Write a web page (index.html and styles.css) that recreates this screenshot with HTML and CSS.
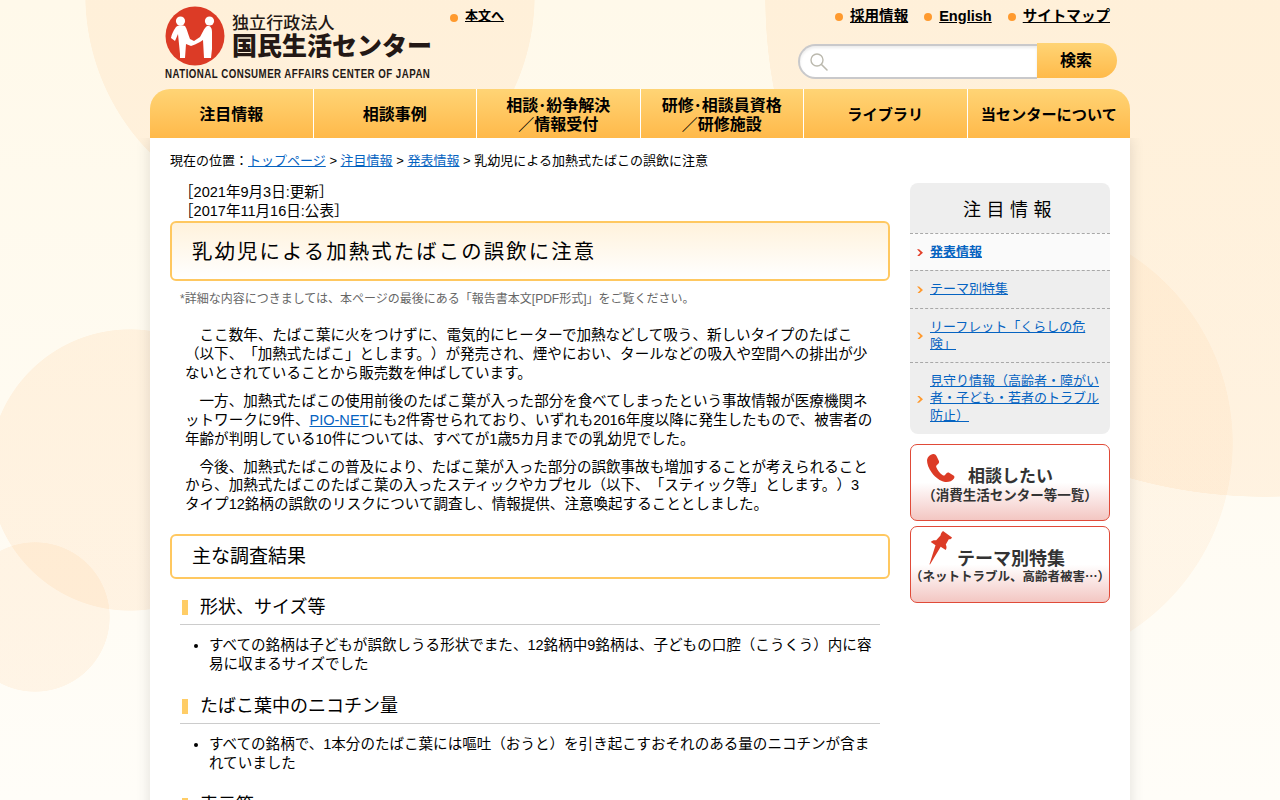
FILE: index.html
```html
<!DOCTYPE html>
<html lang="ja">
<head>
<meta charset="utf-8">
<title>乳幼児による加熱式たばこの誤飲に注意</title>
<link rel="stylesheet" href="styles.css">
</head>
<body>
<div class="page">
  <header class="header">
    <a class="logo" href="#">
      <div class="logo-top">
        <svg class="logo-mark" width="60" height="60" viewBox="0 0 60 60">
          <circle cx="30" cy="30" r="29.5" fill="#dc3b26"/>
          <circle cx="15.5" cy="15" r="4.6" fill="#fff"/>
          <circle cx="44.5" cy="15" r="4.6" fill="#fff"/>
          <path fill="#fff" d="M11 21C8 25 6.500 29 6 32L10 35 13 28 15 48 15 52 20 52 21 38 26 40 30 38.500 35 36 38 34 39 52 46 52 47 43 47 26 C47 21 45 19.500 42 20 C39 22 37 28 35 31 L29 35 L25 33 C23 28 22 23 20 20 C17 19 13 19 11 21Z"/>
        </svg>
        <div class="logo-names">
          <span class="logo-sub">独立行政法人</span>
          <span class="logo-main">国民生活センター</span>
        </div>
      </div>
      <span class="logo-en">NATIONAL CONSUMER AFFAIRS CENTER OF JAPAN</span>
    </a>
    <a class="skip dot-link" href="#">本文へ</a>
    <div class="header-right">
      <nav class="util">
        <a class="dot-link" href="#">採用情報</a>
        <a class="dot-link" href="#">English</a>
        <a class="dot-link" href="#">サイトマップ</a>
      </nav>
      <form class="search">
        <div class="search-input">
          <svg width="20" height="20" viewBox="0 0 20 20"><circle cx="8" cy="8" r="6" fill="none" stroke="#bbb9ae" stroke-width="1.4"/><path d="M12.500 12.500L18 18" stroke="#bbb9ae" stroke-width="1.600" stroke-linecap="round"/></svg>
        </div>
        <div class="search-btn">検索</div>
      </form>
    </div>
  </header>

  <nav class="gnav">
    <a href="#">注目情報</a>
    <a href="#">相談事例</a>
    <a href="#">相談･紛争解決<br>／情報受付</a>
    <a href="#">研修･相談員資格<br>／研修施設</a>
    <a class="narrow" href="#">ライブラリ</a>
    <a class="narrow" href="#">当センターについて</a>
  </nav>

  <div class="panel">
    <p class="crumbs">現在の位置：<a href="#">トップページ</a> &gt; <a href="#">注目情報</a> &gt; <a href="#">発表情報</a> &gt; 乳幼児による加熱式たばこの誤飲に注意</p>
    <div class="columns">
      <main class="main">
        <p class="dates">［2021年9月3日:更新］<br>［2017年11月16日:公表］</p>
        <h1>乳幼児による加熱式たばこの誤飲に注意</h1>
        <p class="note">*詳細な内容につきましては、本ページの最後にある「報告書本文[PDF形式]」をご覧ください。</p>
        <div class="lead">
          <p>ここ数年、たばこ葉に火をつけずに、電気的にヒーターで加熱などして吸う、新しいタイプのたばこ（以下、「加熱式たばこ」とします。）が発売され、煙やにおい、タールなどの吸入や空間への排出が少ないとされていることから販売数を伸ばしています。</p>
          <p>一方、加熱式たばこの使用前後のたばこ葉が入った部分を食べてしまったという事故情報が医療機関ネットワークに9件、<a href="#">PIO-NET</a>にも2件寄せられており、いずれも2016年度以降に発生したもので、被害者の年齢が判明している10件については、すべてが1歳5カ月までの乳幼児でした。</p>
          <p>今後、加熱式たばこの普及により、たばこ葉が入った部分の誤飲事故も増加することが考えられることから、加熱式たばこのたばこ葉の入ったスティックやカプセル（以下、「スティック等」とします。）3<span class="nowrap">タイプ</span>12銘柄の誤飲のリスクについて調査し、情報提供、注意喚起することとしました。</p>
        </div>
        <h2>主な調査結果</h2>
        <h3>形状、サイズ等</h3>
        <ul>
          <li>すべての銘柄は子どもが誤飲しうる形状でまた、12銘柄中9銘柄は、子どもの口腔（こうくう）内に容易に収まるサイズでした</li>
        </ul>
        <h3>たばこ葉中のニコチン量</h3>
        <ul>
          <li>すべての銘柄で、1本分のたばこ葉には嘔吐（おうと）を引き起こすおそれのある量のニコチンが含まれていました</li>
        </ul>
        <h3>表示等</h3>
      </main>
      <aside class="side">
        <div class="snav">
          <div class="snav-title">注目情報</div>
          <a class="snav-item current" href="#"><span>発表情報</span></a>
          <a class="snav-item" href="#"><span>テーマ別特集</span></a>
          <a class="snav-item" href="#"><span>リーフレット「くらしの危険」</span></a>
          <a class="snav-item" href="#"><span>見守り情報（高齢者・障がい者・子ども・若者のトラブル防止）</span></a>
        </div>
        <a class="banner banner-tel" href="#">
          <span class="banner-head">
            <svg class="banner-icon" width="30" height="30" viewBox="0 0 30 30"><path fill="#dc3b26" d="M7 1C4 1.500 1.500 4 1 7c0 4 1.500 8 5 13 3.500 4.500 8 8 13 9 3.500.5 7-.8 9-3.500.8-1.200.5-2.300-.5-3l-4-2.500c-1.200-.7-2.300-.5-3 .3l-1.500 1.700c-.6.6-1.400.7-2.200.2-2.800-1.800-5.300-5-6.500-8-.3-.9-.1-1.600.6-2.200l1.400-1.300c.8-.8 1-1.800.5-3L10.500 3C9.800 1.500 8.500.8 7 1z"/></svg>
            <b>相談したい</b>
          </span>
          <span class="banner-sub">（消費生活センター等一覧）</span>
        </a>
        <a class="banner banner-pin" href="#">
          <span class="banner-head">
            <svg class="banner-icon" width="24" height="34" viewBox="0 0 24 34"><path fill="#dc3b26" d="M15 0l9 6.500c-.5 1.300-1.700 2-3.200 1.700l-3 5.300c1 2 1 4-.1 5.500l-5-3.300L2 33.500l-.5-.3 6-19-4.700-3.200c1.300-1.600 3.200-2.200 5.400-1.700L12.500 4.500C12.800 3 13.600 1 15 0z"/></svg>
            <b>テーマ別特集</b>
          </span>
          <span class="banner-sub">（ネットトラブル、高齢者被害…）</span>
        </a>
      </aside>
    </div>
  </div>
</div>
</body>
</html>
```
FILE: styles.css
```css
* { box-sizing: border-box; }
html, body { margin: 0; height: 800px; overflow: hidden; }
body {
  font-family: "Liberation Sans", "Noto Sans CJK JP", sans-serif;
  font-size: 14.56px;
  line-height: 1.3;
  color: #000;
  text-spacing-trim: space-all;
  background-color: #fffbf0;
  background-repeat: no-repeat;
  background-image:
    radial-gradient(circle 225px at 310px -5px, rgba(255,189,121,.15) 99.7%, transparent 100%),
    radial-gradient(circle 500px at 1265px -3px, rgba(255,189,121,.15) 99.9%, transparent 100%),
    radial-gradient(circle 225px at 1008px 443px, rgba(255,189,121,.1) 99.7%, transparent 100%),
    radial-gradient(circle 141px at 130px 470px, rgba(255,189,121,.15) 99.5%, transparent 100%),
    radial-gradient(circle 75px at 35px 617px, rgba(255,189,121,.13) 99.2%, transparent 100%),
    linear-gradient(#fff9ea, #fffdf8);
}
a { color: #0563c1; }
.nowrap { white-space: nowrap; }
.page { width: 980px; margin: 0 auto; }

/* header */
.header { display: flex; height: 89px; }
.logo { display: block; width: 285px; margin-left: 15px; padding-top: 6px; color: #231815; text-decoration: none; flex: none; }
.logo-top { display: flex; height: 60px; }
.logo-mark { flex: none; }
.logo-names { display: flex; flex-direction: column; margin-left: 7px; padding-top: 6px; }
.logo-sub { font-size: 17px; font-weight: 500; line-height: 20px; letter-spacing: .1px; font-family: "Noto Sans CJK JP", sans-serif; }
.logo-main { font-size: 25px; font-weight: 900; line-height: 32px; margin-top: -4px; white-space: nowrap; font-family: "Noto Sans CJK JP", sans-serif; }
.logo-en { display: block; font-size: 12.500px; font-weight: 700; line-height: 16px; letter-spacing: .6px; white-space: nowrap; transform: scaleX(.777); transform-origin: left center; }
.dot-link { position: relative; color: #000; font-weight: 700; padding-left: 15px; display: inline-block; }
.dot-link::before { content: ""; position: absolute; left: 0; top: 6px; width: 8px; height: 8px; border-radius: 50%; background: #ff9a2e; }
.skip { font-size: 13px; align-self: flex-start; margin-top: 8px; margin-left: 0; height: 19px; }
.header-right { margin-left: auto; margin-right: 13px; width: 319px; display: flex; flex-direction: column; align-items: flex-end; }
.util { display: flex; gap: 16px; margin-top: 7px; margin-right: 7px; height: 19px; white-space: nowrap; }
.search { display: flex; margin-top: 17px; align-items: flex-start; }
.search-input { width: 239px; height: 35px; margin-top: 1px; background: #fff; border: 2px solid #c9c9cb; border-right: 0; border-radius: 18px 0 0 18px; box-shadow: inset 0 2px 3px rgba(0,0,0,.08); padding: 6px 0 0 9px; }
.search-btn { width: 80px; height: 35px; padding-right: 2px; border-radius: 0 18px 18px 0; background: linear-gradient(#ffd475, #ffba4a); text-align: center; font-size: 16px; font-weight: 700; line-height: 35px; }

/* global nav */
.gnav { display: flex; height: 49px; border-radius: 20px 20px 0 0; overflow: hidden; background: linear-gradient(#ffd475, #ffb94a); }
.gnav a { flex: 1 1 0; display: flex; align-items: center; justify-content: center; padding-top: 2px; text-align: center; color: #000; text-decoration: none; font-size: 16px; font-weight: 700; line-height: 19px; white-space: nowrap; border-left: 1px solid #fff; }
.gnav a:first-child { border-left: 0; }
.gnav a.narrow { font-size: 15.200px; }

/* panel */
.panel { background: #fff; box-shadow: 0 0 14px rgba(0,0,0,.12); padding: 14px 20px 0; height: 700px; clip-path: inset(0 -20px 0 -20px); }
.crumbs { margin: 0; font-size: 13px; line-height: 17px; }
.columns { display: flex; justify-content: space-between; margin-top: 14px; }
.main { width: 720px; }
.dates { margin: 0; padding-left: 9px; line-height: 19px; }
h1 { margin: 0; height: 60px; border: 2px solid #ffc860; border-radius: 6px; background: linear-gradient(#fff2dc, #fff); padding-left: 20px; font-size: 20.400px; font-weight: 400; letter-spacing: 2.100px; line-height: 58px; }
.note { margin: 10px 0 0 10px; font-size: 12px; line-height: 16px; color: #666; }
.lead { margin: 19px 15px 0; }
.lead p { margin: 0 0 9px; text-indent: 1em; }
h2 { margin: 20px 0 0; height: 45px; border: 2px solid #ffc860; border-radius: 6px; padding-left: 20px; font-size: 19px; font-weight: 400; line-height: 41px; }
h3 { position: relative; margin: 16px 10px 0; padding-left: 20px; height: 30px; border-bottom: 1px solid #ccc; font-size: 18px; font-weight: 400; line-height: 24px; }
h3::before { content: ""; position: absolute; left: 2px; top: 5px; width: 6px; height: 15px; background: #ffcd66; }
ul { margin: 11px 10px 0; padding: 0 0 0 29px; list-style: none; }
li { position: relative; line-height: 18.900px; padding-bottom: 4px; }
li::before { content: ""; position: absolute; left: -15px; top: 8px; width: 4px; height: 4px; border-radius: 50%; background: #000; }

/* sidebar */
.side { width: 200px; flex: none; }
.snav { background: #eee; border-radius: 8px; overflow: hidden; }
.snav-title { height: 50px; text-align: center; font-size: 18px; letter-spacing: 5.500px; line-height: 54px; }
.snav-item { display: block; position: relative; border-top: 1px dashed #a8a8a8; padding: 9px 10px 10px 20px; font-size: 13px; line-height: 17.300px; color: #0563c1; }
.snav-item::before { content: ""; position: absolute; left: 7px; top: calc(50% - 3px); width: 6px; height: 7px; background: #ff9a2e; clip-path: polygon(0 0, 35% 0, 100% 50%, 35% 100%, 0 100%, 55% 50%); }
.snav-item.current { background: #fafafa; font-weight: 700; }
.snav-item.current::before { background: #e2402a; }
.banner { display: flex; flex-direction: column; align-items: center; height: 77px; margin-top: 10px; border: 1px solid #e04a38; border-radius: 7px; background: linear-gradient(#fff 50%, #f3c6c2); color: #333; text-decoration: none; font-family: "Noto Sans CJK JP", sans-serif; font-weight: 700; white-space: nowrap; }
.banner-pin { margin-top: 5px; }
.banner-head { display: flex; align-items: flex-start; font-size: 18px; line-height: 24px; }
.banner-head b { font-weight: 700; }
.banner-sub { font-size: 13.500px; line-height: 17px; }
.banner-pin .banner-sub { font-size: 12.500px; }
.banner-tel .banner-head { height: 41px; padding-top: 18px; margin-left: -41px; font-size: 17px; }
.banner-tel .banner-icon { margin: -10px 12px 0 0; }
.banner-pin .banner-head { height: 40px; padding-top: 18px; margin-left: -27px; }
.banner-pin .banner-icon { margin: -14px 5px 0 0; }
```
